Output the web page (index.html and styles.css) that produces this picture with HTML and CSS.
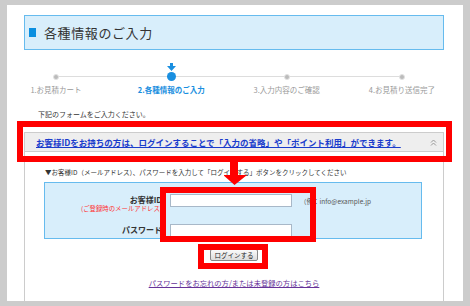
FILE: index.html
```html
<!DOCTYPE html>
<html lang="ja">
<head>
<meta charset="utf-8">
<link rel="stylesheet" href="styles.css">
</head>
<body>
<div class="page">
  <div class="title"><span class="title-mark"></span><h1>各種情報のご入力</h1></div>

  <ol class="steps">
    <li class="step"><span class="step-arrow"></span><span class="dot"></span><span class="step-label">1.お見積カート</span></li>
    <li class="step active"><span class="step-arrow"><svg width="9" height="8" viewBox="0 0 9 8"><polygon points="3,0 6,0 6,3 9,3 4.5,8 0,3 3,3" fill="#1a8fe0"/></svg></span><span class="dot"></span><span class="step-label">2.各種情報のご入力</span></li>
    <li class="step"><span class="step-arrow"></span><span class="dot"></span><span class="step-label">3.入力内容のご確認</span></li>
    <li class="step"><span class="step-arrow"></span><span class="dot"></span><span class="step-label">4.お見積り送信完了</span></li>
  </ol>

  <p class="intro">下記のフォームをご入力ください。</p>

  <div class="acc-head">
    <a class="acc-link" href="#">お客様IDをお持ちの方は、ログインすることで「入力の省略」や「ポイント利用」ができます。</a>
    <svg class="acc-icon" width="7" height="7" viewBox="0 0 7 7"><polyline points="1,3.5 3.5,1 6,3.5" fill="none" stroke="#999" stroke-width="1"/><polyline points="1,6.5 3.5,4 6,6.5" fill="none" stroke="#999" stroke-width="1"/></svg>
  </div>

  <div class="acc-body">
    <p class="instr">▼お客様ID（メールアドレス）、パスワードを入力して「ログインする」ボタンをクリックしてください</p>
    <div class="login-box">
      <div class="lbl"><b>お客様ID</b><span class="note">(ご登録時のメールアドレス)</span></div>
      <input class="field" type="text">
      <span class="example">（例：info@example.jp</span>
      <div class="lbl lbl-pw"><b>パスワード</b></div>
      <input class="field" type="password">
      <span></span>
    </div>
    <div class="btn-row"><button class="btn" type="button">ログインする</button></div>
    <div class="link-row"><a class="forgot" href="#">パスワードをお忘れの方/または未登録の方はこちら</a></div>
  </div>

  <div class="frame frame-1"></div>
  <div class="frame frame-2"></div>
  <div class="frame frame-3"></div>
  <svg class="red-arrow" width="24" height="23" viewBox="0 0 24 23"><polygon points="6,0 14,0 14,13 23,13 10.5,23 -1,13 6,13" fill="#ff0000"/></svg>
</div>
</body>
</html>
```
FILE: styles.css
```css
* { box-sizing: border-box; }
html, body { margin: 0; padding: 0; }
body {
  background: #cccccc;
  padding: 5px 7px;
  width: 470px;
  height: 306px;
  overflow: hidden;
  font-family: "Noto Sans CJK JP", "Noto Sans", sans-serif;
  color: #333;
}
.page {
  position: relative;
  background: #fff;
  width: 456px;
  height: 296px;
  padding-top: 10px;
  overflow: hidden;
}
.title {
  margin: 0 19px 0 17px;
  height: 35px;
  background: #d8eefb;
  border: 1px solid #66bbee;
  display: flex;
  align-items: center;
  padding-left: 4px;
  gap: 8px;
}
.title-mark { width: 7px; height: 9px; background: #0a8fe0; }
.title h1 {
  margin: 0;
  font-size: 13px;
  font-weight: normal;
  letter-spacing: 0.6px;
  color: #333;
  line-height: 1;
}
.steps {
  list-style: none;
  margin: 0 0 0 9px;
  padding: 13px 0 0 0;
  display: grid;
  grid-template-columns: repeat(4, 80px);
  column-gap: 35.3px;
  position: relative;
}
.steps::before {
  content: "";
  position: absolute;
  left: 40px;
  width: 346px;
  top: 26px;
  height: 1px;
  background: #dddddd;
}
.step {
  display: flex;
  flex-direction: column;
  align-items: center;
  position: relative;
}
.step-arrow { height: 8px; display: flex; align-items: flex-start; }
.step-arrow svg { display: block; }
.dot {
  width: 6px;
  height: 6px;
  margin-bottom: 2px;
  border-radius: 50%;
  background: #bbbbbb;
  border: 1px solid #e2e2e2;
  margin-top: 3px;
}
.step.active .dot {
  width: 9px;
  height: 9px;
  background: #1a8fe0;
  border: none;
  margin-top: 1px;
  margin-bottom: 1px;
}
.step-label {
  margin-top: 3px;
  font-size: 7.5px;
  line-height: 10px;
  color: #999;
  white-space: nowrap;
}
.step.active .step-label { color: #1a8fe0; font-weight: bold; }
.intro {
  margin: 14px 0 0 31px;
  font-size: 7px;
  line-height: 10px;
  color: #333;
}
.acc-head {
  margin: 13px 19px 0 17px;
  height: 20px;
  background: #eeeeee;
  border: 1px solid #cccccc;
  display: flex;
  align-items: center;
  justify-content: space-between;
  padding: 0 6px 0 11px;
}
.acc-link {
  font-size: 8.5px;
  font-weight: bold;
  color: #1a3ccc;
  text-decoration: underline;
  white-space: nowrap;
  line-height: 1;
}
.acc-icon { display: block; }
.acc-body {
  margin: 0 19px 0 17px;
  border-left: 1px solid #cccccc;
  border-right: 1px solid #cccccc;
  height: 160px;
  padding-top: 15px;
}
.instr {
  margin: 0 0 0 20px;
  font-size: 6.5px;
  line-height: 10px;
  white-space: nowrap;
  color: #333;
}
.login-box {
  margin: 5px 0 0 19px;
  width: 378px;
  height: 57px;
  background: #d8eefb;
  border: 1px solid #66bbee;
  display: grid;
  grid-template-columns: 117px 122px auto;
  column-gap: 8px;
  row-gap: 9px;
  align-items: start;
  padding-top: 11px;
}
.lbl {
  display: flex;
  flex-direction: column;
  align-items: flex-end;
  line-height: 10px;
}
.lbl b { font-size: 8px; color: #333; margin-top: 1px; }
.lbl-pw b { margin-top: 1px; }
.note {
  font-size: 6.4px;
  line-height: 8px;
  color: #ff3333;
  white-space: nowrap;
}
.field {
  width: 122px;
  height: 13px;
  margin: 0;
  padding: 0;
  border: 1px solid #a8b8c8;
  background: #fff;
}
.example {
  font-size: 6.5px;
  line-height: 10px;
  color: #555;
  white-space: nowrap;
  margin-top: 2px;
}
.btn-row { display: flex; justify-content: center; margin-top: 10px; }
.btn {
  width: 48px;
  height: 12px;
  padding: 0;
  font-family: inherit;
  font-size: 6.5px;
  line-height: 10px;
  color: #222;
  border: 1px solid #888;
  border-radius: 2px;
  background: linear-gradient(#fafafa, #dcdcdc);
}
.link-row { display: flex; justify-content: center; margin-top: 17px; }
.forgot {
  font-size: 7.3px;
  line-height: 10px;
  color: #663399;
  text-decoration: underline;
  white-space: nowrap;
}
.frame {
  position: absolute;
  border: 6px solid #ff0000;
}
.frame-1 { left: 10px; top: 116px; width: 435px; height: 41px; }
.frame-2 { left: 153px; top: 182px; width: 156px; height: 55px; }
.frame-3 { left: 191px; top: 239px; width: 70px; height: 25px; }
.red-arrow { position: absolute; left: 217px; top: 157px; }
```
